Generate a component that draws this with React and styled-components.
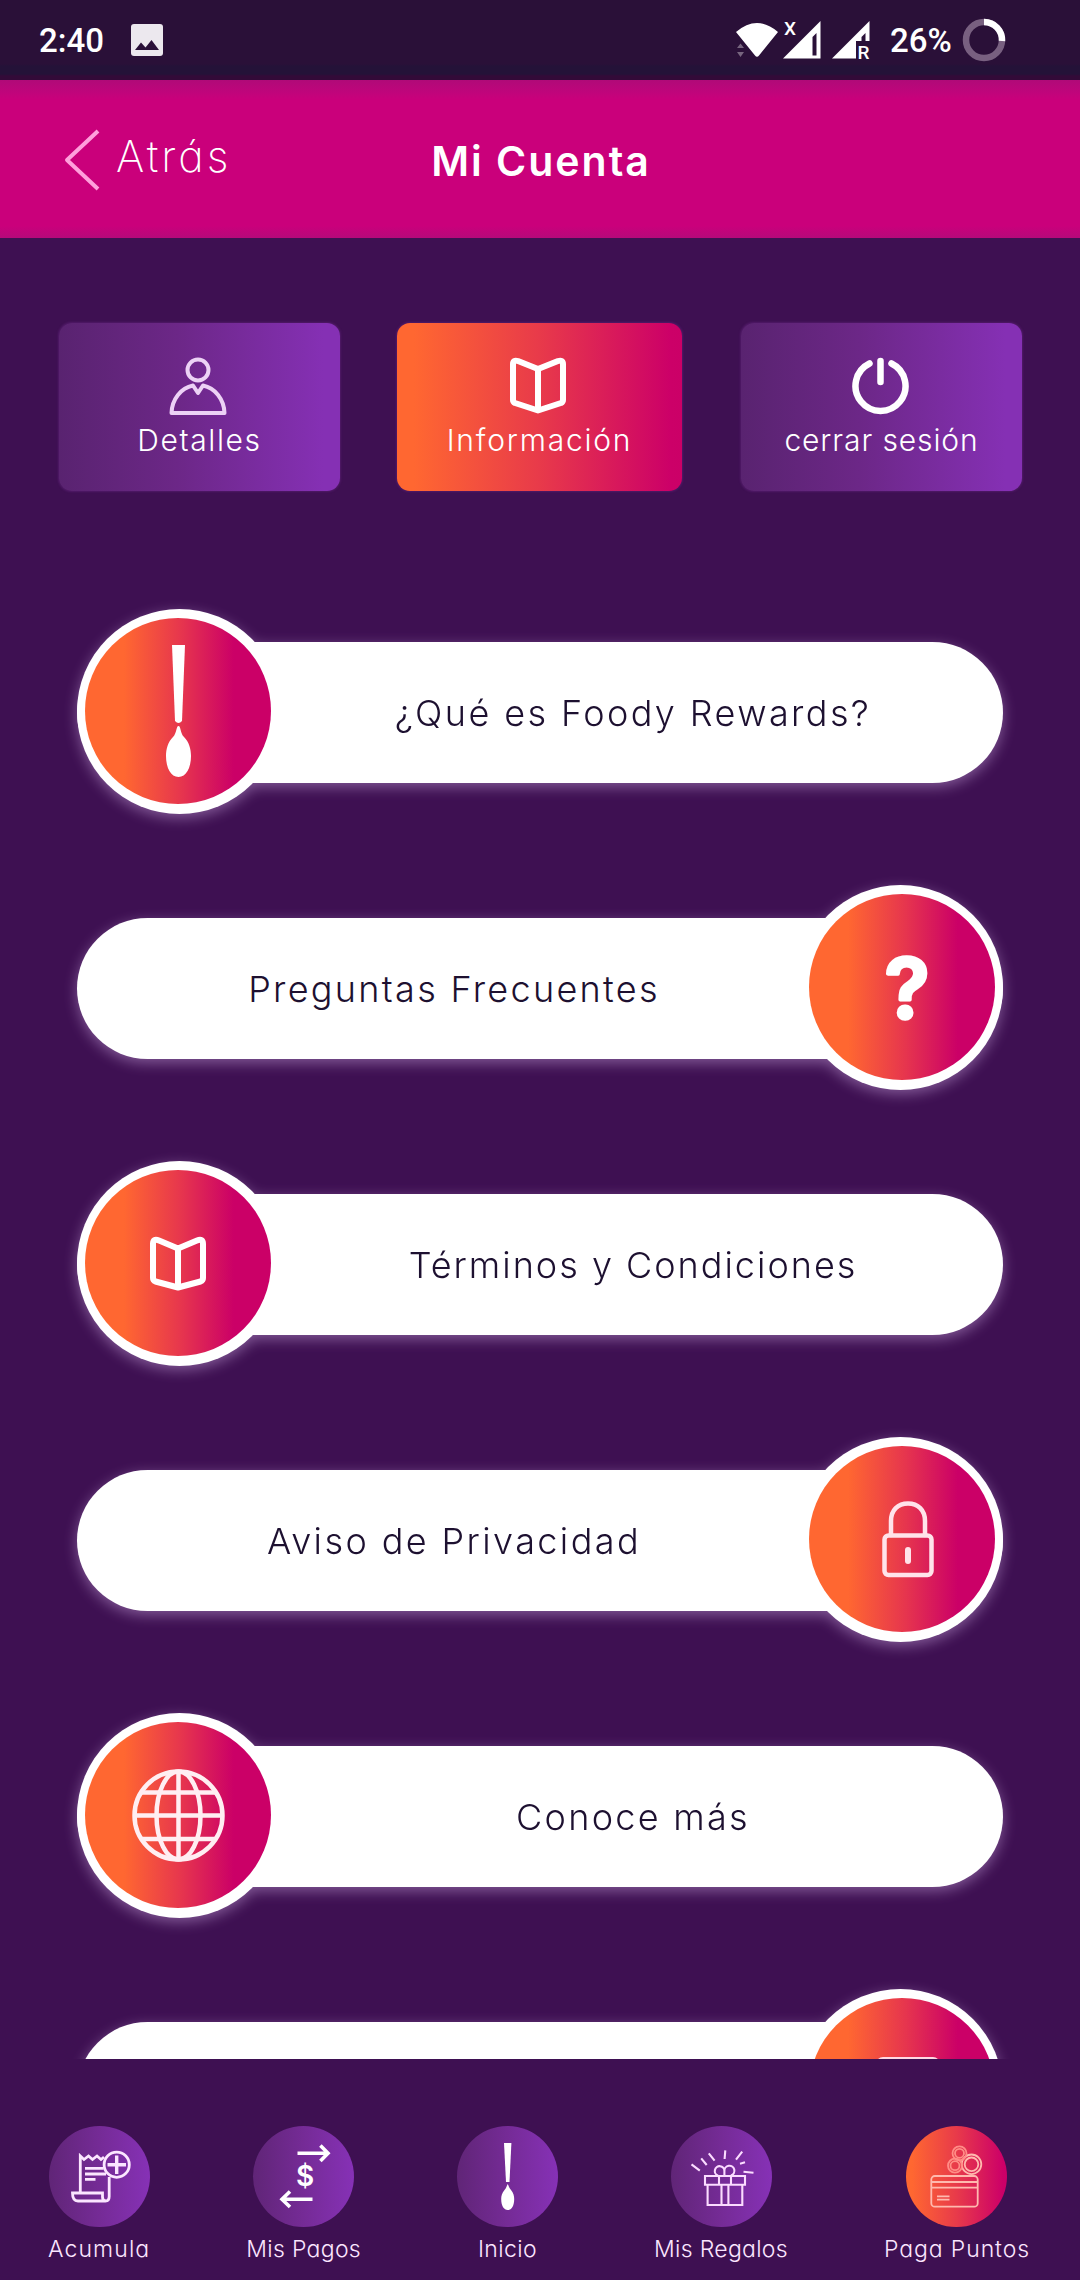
import React from 'react';
import styled, { createGlobalStyle } from 'styled-components';


const mainFont = `Inter, 'Liberation Sans', sans-serif`;
const statusFont = `Roboto, 'Liberation Sans', sans-serif`;

const hot = 'linear-gradient(90deg, #ff6731 0%, #ff6731 6%, #e83a4a 50%, #cc0068 96%, #cb0067 100%)';
const hotRound = 'linear-gradient(90deg, #ff6731 0%, #ff6731 21%, #e6354e 52%, #cb0067 80%, #cb0067 100%)';
const purple = 'linear-gradient(90deg, #592370 0%, #6c2787 42%, #8530b4 94%, #8530b4 100%)';

const SpoonIcon = () => (
  <BadgeSvg viewBox="0 0 186 186">
    <path d="M87 27 H100 L97 103 Q93.5 107 90 103 Z" fill="#fff" />
    <path d="M93.5 108 C96 108 95 115 99 119 C104 124 106 131 106 138 C106 150 101 159 93.5 159 C86 159 81 150 81 138 C81 131 83 124 88 119 C92 115 91 108 93.5 108 Z" fill="#fff" />
  </BadgeSvg>
);

const QuestionIcon = () => (
  <BadgeSvg viewBox="0 0 186 186">
    <QuestionText x="98" y="124" textAnchor="middle">?</QuestionText>
  </BadgeSvg>
);

const BookIcon = () => (
  <BadgeSvg viewBox="0 0 186 186">
    <g fill="none" stroke="#fff" strokeWidth="6" strokeLinejoin="round">
      <path d="M93 78.5 L74 70.5 Q68 68 68 74 V108 Q68 110.5 70.5 111.5 L93 117.5 L115.5 111.5 Q118 110.5 118 108 V74 Q118 68 112 70.5 Z" />
      <path d="M93 78.5 V117" />
    </g>
  </BadgeSvg>
);

const LockIcon = () => (
  <BadgeSvg viewBox="0 0 186 186">
    <g fill="none" stroke="#ffe3ea" strokeWidth="4.5" strokeLinecap="round">
      <rect x="75.5" y="89.5" width="47" height="39.5" rx="4" />
      <path d="M82 89 V75 C82 64 89 57.5 99 57.5 C109 57.5 116 64 116 75 V89" />
      <path d="M99 104 V115" strokeWidth="6" />
    </g>
  </BadgeSvg>
);

const GlobeIcon = () => (
  <BadgeSvg viewBox="0 0 186 186">
    <g fill="none" stroke="#ffeef2" strokeWidth="4.5">
      <circle cx="93.5" cy="93.5" r="44" />
      <ellipse cx="93.5" cy="93.5" rx="22" ry="44" />
      <path d="M93.5 49 V138 M49 93.5 H138 M57 70.5 H130 M57 117 H130" />
    </g>
  </BadgeSvg>
);

const MailIcon = () => (
  <BadgeSvg viewBox="0 0 186 186">
    <rect x="69" y="61" width="60" height="56" rx="5" fill="none" stroke="#ffd9e2" strokeWidth="4" />
  </BadgeSvg>
);

const items = [
  { text: '¿Qué es Foody Rewards?', icon: <SpoonIcon />, ls: 2.4 },
  { text: 'Preguntas Frecuentes', icon: <QuestionIcon />, right: true, ls: 2.3 },
  { text: 'Términos y Condiciones', icon: <BookIcon />, ls: 2 },
  { text: 'Aviso de Privacidad', icon: <LockIcon />, right: true, ls: 2.4 },
  { text: 'Conoce más', icon: <GlobeIcon />, ls: 2.3 },
  { text: '', icon: <MailIcon />, right: true, ls: 2 },
];

const StatusBar = () => (
  <Status>
    <Clock>2:40</Clock>
    <svg width="32" height="32" viewBox="0 0 32 32">
      <rect width="32" height="32" rx="3" fill="#ece8ee" />
      <path d="M4 26 L10 18.5 L14.5 23.5 L20.5 16 L28 26 Z" fill="#2a1038" />
    </svg>
    <StatusIcons>
      <svg width="140" height="44" viewBox="734 18 140 44">
        <path d="M736 32 Q757 14 778 32 L759 55.5 Q757 58 755 55.5 Z" fill="#fff" />
        <path d="M737 48 L740.5 43.5 L744 48 Z M737 52 H744 L740.5 57 Z" fill="#77657f" />
        <path d="M783 58.5 L820.5 21 V58.5 Z M812.5 37 V55.5 H816.5 V33 Z" fill="#fff" fillRule="evenodd" />
        <SignalMark x="784" y="35" fontSize="19">X</SignalMark>
        <path d="M832 58.5 L869.5 21 V41 H865.5 V33 L861.5 37 V41 H856 V58.5 Z" fill="#fff" />
        <SignalMark x="857.5" y="58.5" fontSize="19">R</SignalMark>
      </svg>
      <Battery>26%</Battery>
      <svg width="44" height="44" viewBox="0 0 44 44">
        <circle cx="22" cy="22" r="18" fill="none" stroke="#786080" strokeWidth="6.5" />
        <path d="M22 4 A18 18 0 0 1 40 23" fill="none" stroke="#fff" strokeWidth="6.5" />
      </svg>
    </StatusIcons>
  </Status>
);

const App = () => {
  return (
    <Screen>
      <GlobalStyle />
      <StatusBar />

      <Header>
        <Back>
          <svg width="38" height="64" viewBox="0 0 38 64">
            <path d="M35 3 L4 32 L35 61" fill="none" stroke="#ff9fdc" strokeWidth="4" strokeLinejoin="round" />
          </svg>
          <BackText>Atrás</BackText>
        </Back>
        <Title>Mi Cuenta</Title>
      </Header>

      <Tabs>
        <Tab>
          <TabSvg viewBox="0 0 60 60">
            <g fill="none" stroke="#ecd2f5" strokeWidth="4" strokeLinejoin="round">
              <ellipse cx="30" cy="13" rx="10.5" ry="10.5" />
              <path d="M3.5 56 C4 42 13 31 25 28.5 L30 36 L35 28.5 C47 31 56 42 56.5 56 Z" />
            </g>
          </TabSvg>
          <TabText $ls={1.6}>Detalles</TabText>
        </Tab>
        <Tab $active>
          <TabSvg viewBox="0 0 60 60">
            <g fill="none" stroke="#fff" strokeWidth="6" strokeLinejoin="round">
              <path d="M30 12 L10 4 Q5 2.5 5 7 V43 Q5 45 7 46 L30 53.5 L53 46 Q55 45 55 43 V7 Q55 2.5 50 4 Z" />
              <path d="M30 12 V53" />
            </g>
          </TabSvg>
          <TabText $ls={1.8}>Información</TabText>
        </Tab>
        <Tab>
          <TabSvg viewBox="0 0 60 60">
            <g fill="none" stroke="#fff" strokeWidth="6.5" strokeLinecap="round">
              <path d="M19.5 6.5 A25 25 0 1 0 41.5 6.5" />
              <path d="M30.5 4 V25" />
            </g>
          </TabSvg>
          <TabText $ls={0.9}>cerrar sesión</TabText>
        </Tab>
      </Tabs>

      <List>
        {items.map((item, i) => (
          <Row key={i} $right={item.right}>
            <Badge $right={item.right}>
              <BadgeInner>{item.icon}</BadgeInner>
            </Badge>
            <Pill $right={item.right} $ls={item.ls}>{item.text}</Pill>
          </Row>
        ))}
      </List>

      <Nav>
        <NavItem>
          <NavCircle>
            <svg width="101" height="101" viewBox="0 0 101 101">
              <g fill="none" stroke="#fbe6ff" strokeWidth="2.8">
                <path d="M31.3 67 V30 L35 33.5 L39.5 30 L43.5 33.5 L48 30 L52 33.5 L55 31" />
                <path d="M60.2 51 V70.5 Q60.2 75 56.5 75 H29 Q23.5 75 23.5 67 H53.5 V71 Q53.5 75 57 75" />
                <path d="M36 42.3 H54.5 M36 48 H57 M36 53.3 H46.5" />
                <circle cx="67.7" cy="38.7" r="12.6" />
                <path d="M67.7 29.5 V48 M58.5 38.7 H77" strokeWidth="3.4" />
              </g>
            </svg>
          </NavCircle>
          <NavText $ls={1.1}>Acumula</NavText>
        </NavItem>
        <NavItem>
          <NavCircle>
            <svg width="101" height="101" viewBox="0 0 101 101">
              <g fill="none" stroke="#fff" strokeWidth="3.6">
                <path d="M44.5 27.3 H75 M67.4 19.5 L75 27.3 L67.4 35" />
                <path d="M59.5 73.3 H28.5 M37 65.5 L29 73.3 L37 81" />
              </g>
              <DollarText x="52" y="60" textAnchor="middle">$</DollarText>
            </svg>
          </NavCircle>
          <NavText $ls={0.3}>Mis Pagos</NavText>
        </NavItem>
        <NavItem>
          <NavCircle>
            <svg width="101" height="101" viewBox="0 0 101 101">
              <path d="M47 17 H54.4 L52.5 56 H49 Z" fill="#fff" />
              <path d="M50.7 58 C52 60 52 62 54 64 C56.5 67 57.2 70 57.2 73 C57.2 80 54.5 84 50.7 84 C47 84 44.2 80 44.2 73 C44.2 70 45 67 47.5 64 C49.5 62 49.5 60 50.7 58 Z" fill="#fff" />
            </svg>
          </NavCircle>
          <NavText $ls={0.4}>Inicio</NavText>
        </NavItem>
        <NavItem>
          <NavCircle>
            <svg width="101" height="101" viewBox="0 0 101 101">
              <g fill="none" stroke="#fbdcff" strokeWidth="2.1">
                <path d="M34 50 H74 V58.7 H34 Z M36.6 58.7 V79 H71.3 V58.7" />
                <path d="M48 50 V58.7 M60 50 V58.7 M50.5 58.7 V79 M57.4 58.7 V79" />
                <path d="M47 49.5 A4.8 4.8 0 1 1 53.4 45 A5 5 0 1 1 60 49.5 M53.4 45 V50" />
                <path d="M20.5 38.3 L28.8 44.7 M30.2 32.3 L35.7 39 M37.8 27.3 L43.6 34.7 M54.3 24.3 L53.6 33 M71.2 25.7 L65 33.7 M74 36.3 L69 37.7 M72.5 45.7 L82.5 46.7" />
              </g>
            </svg>
          </NavCircle>
          <NavText $ls={0.3}>Mis Regalos</NavText>
        </NavItem>
        <NavItem>
          <NavCircle $active>
            <svg width="101" height="101" viewBox="0 0 101 101">
              <g fill="none" stroke="#ffb9ae" strokeWidth="1.8">
                <rect x="25.3" y="50" width="46.4" height="30.7" rx="3.5" />
                <path d="M25.3 56 H71.7 M25.3 61.7 H71.7 M31 70.3 H43.5 M31 73.7 H43.5" />
                <circle cx="65.5" cy="38.3" r="9.8" />
                <circle cx="65.5" cy="38.3" r="6.8" />
                <g stroke="#ff8d86">
                  <circle cx="53.5" cy="27.3" r="7" />
                  <circle cx="53.5" cy="27.3" r="4.5" />
                  <circle cx="49" cy="39.7" r="7" />
                  <circle cx="49" cy="39.7" r="4.5" />
                </g>
              </g>
            </svg>
          </NavCircle>
          <NavText $ls={0.9}>Paga Puntos</NavText>
        </NavItem>
      </Nav>
    </Screen>
  );
};

export default App;


const GlobalStyle = createGlobalStyle`
  body {
    margin: 0;
    background-color: #3e1052;
  }
`;

const Screen = styled.div`
  width: 1080px;
  height: 2280px;
  display: flex;
  flex-direction: column;
  overflow: hidden;
  background-color: #3e1052;
  font-family: ${mainFont};
`;

const Status = styled.div`
  height: 80px;
  flex-shrink: 0;
  box-sizing: border-box;
  display: flex;
  align-items: center;
  padding: 0 74px 0 39px;
  background: linear-gradient(#2a1038 0, #2a1038 64px, #241238 66px, #241238 74px, #330a38 76px);
  color: #fff;
  font-family: ${statusFont};
`;

const Clock = styled.div`
  width: 92px;
  font-size: 33px;
  font-weight: 500;
`;

const StatusIcons = styled.div`
  margin-left: auto;
  display: flex;
  align-items: center;
`;

const SignalMark = styled.text`
  fill: #fff;
  font-family: ${statusFont};
  font-weight: 500;
`;

const Battery = styled.div`
  width: 72px;
  margin-left: 16px;
  font-size: 33px;
  font-weight: 500;
`;

const Header = styled.div`
  height: 158px;
  flex-shrink: 0;
  box-sizing: border-box;
  display: grid;
  grid-template-columns: 1fr auto 1fr;
  align-items: center;
  padding: 2px 61px 0 63px;
  background: linear-gradient(#b00a78 0, #bf057b 12px, #ca007b 20px, #ca007b 146px, #b5097a 158px);
  color: #fff;
`;

const Back = styled.div`
  display: flex;
  align-items: center;
  gap: 15px;
`;

const BackText = styled.span`
  margin-top: -8px;
  font-size: 43px;
  font-weight: 200;
  letter-spacing: 3px;
  font-feature-settings: 'cv11';
`;

const Title = styled.div`
  margin-top: 1px;
  font-size: 41px;
  font-weight: 600;
  letter-spacing: 2px;
`;

const Tabs = styled.div`
  display: flex;
  flex-shrink: 0;
  gap: 57px;
  padding: 85px 58px 0 59px;
`;

const Tab = styled.div`
  width: ${({ $active }) => ($active ? '285px' : '281px')};
  height: 168px;
  box-sizing: border-box;
  padding-top: 34px;
  display: flex;
  flex-direction: column;
  align-items: center;
  border-radius: 13px;
  background: ${({ $active }) => ($active ? hot : purple)};
  box-shadow: 0 0 2px 1px rgba(110, 40, 140, 0.4);

  &:last-child {
    margin-left: 2px;
  }
`;

const TabSvg = styled.svg`
  width: 60px;
  height: 60px;
  margin-right: 3px;
`;

const TabText = styled.span`
  margin-top: 4px;
  color: #fff;
  font-size: 30px;
  line-height: 38px;
  font-weight: 300;
  letter-spacing: ${({ $ls }) => $ls}px;
  white-space: nowrap;
`;

const List = styled.div`
  height: 1568px;
  flex-shrink: 0;
  box-sizing: border-box;
  padding: 118px 77px 0;
  display: flex;
  flex-direction: column;
  gap: 71px;
  overflow: hidden;
`;

/* one glow for the badge and pill together, so it never falls on the pill */
const Row = styled.div`
  height: 205px;
  flex-shrink: 0;
  display: flex;
  flex-direction: ${({ $right }) => ($right ? 'row-reverse' : 'row')};
  align-items: center;
  filter: drop-shadow(0 4px 7px rgba(235, 200, 255, 0.4));
`;

const Badge = styled.div`
  width: 205px;
  height: 205px;
  flex-shrink: 0;
  box-sizing: border-box;
  z-index: 1;
  padding: ${({ $right }) => ($right ? '9px 8px 0 11px' : '9px 11px 0 8px')};
  margin: ${({ $right }) => ($right ? '0 0 0 -205px' : '0 -205px 0 0')};
  border-radius: 50%;
  background-color: #fff;
`;

const BadgeInner = styled.div`
  width: 186px;
  height: 186px;
  border-radius: 50%;
  background: ${hotRound};
`;

const BadgeSvg = styled.svg`
  display: block;
  width: 186px;
  height: 186px;
`;

const QuestionText = styled.text`
  fill: #fff;
  stroke: #fff;
  stroke-width: 3.5px;
  stroke-linejoin: round;
  font-family: ${mainFont};
  font-size: 83px;
  font-weight: 600;
`;

const Pill = styled.div`
  flex: 1;
  height: 141px;
  box-sizing: border-box;
  display: flex;
  align-items: center;
  justify-content: center;
  margin-top: 2px;
  padding: ${({ $right }) => ($right ? '0 172px 0 0' : '0 0 0 186px')};
  border-radius: 71px;
  background-color: #fff;
  color: #1d1030;
  font-size: 36px;
  font-weight: 300;
  letter-spacing: ${({ $ls }) => $ls}px;
  white-space: nowrap;
`;

const Nav = styled.div`
  display: flex;
  justify-content: space-between;
  padding: 67px 50px 0 48px;
`;

const NavItem = styled.div`
  display: flex;
  flex-direction: column;
  align-items: center;
`;

const NavCircle = styled.div`
  width: 101px;
  height: 101px;
  border-radius: 50%;
  background: ${({ $active }) => ($active ? hot : 'linear-gradient(90deg, #602577, #752b96 50%, #8631b6)')};
`;

const NavText = styled.span`
  margin-top: 8px;
  color: #fbe6ff;
  font-size: 23px;
  line-height: 28px;
  font-weight: 300;
  letter-spacing: ${({ $ls }) => $ls}px;
  font-feature-settings: 'cv11';
  white-space: nowrap;
`;

const DollarText = styled.text`
  fill: #fff;
  font-family: ${mainFont};
  font-size: 28px;
  font-weight: 600;
`;
